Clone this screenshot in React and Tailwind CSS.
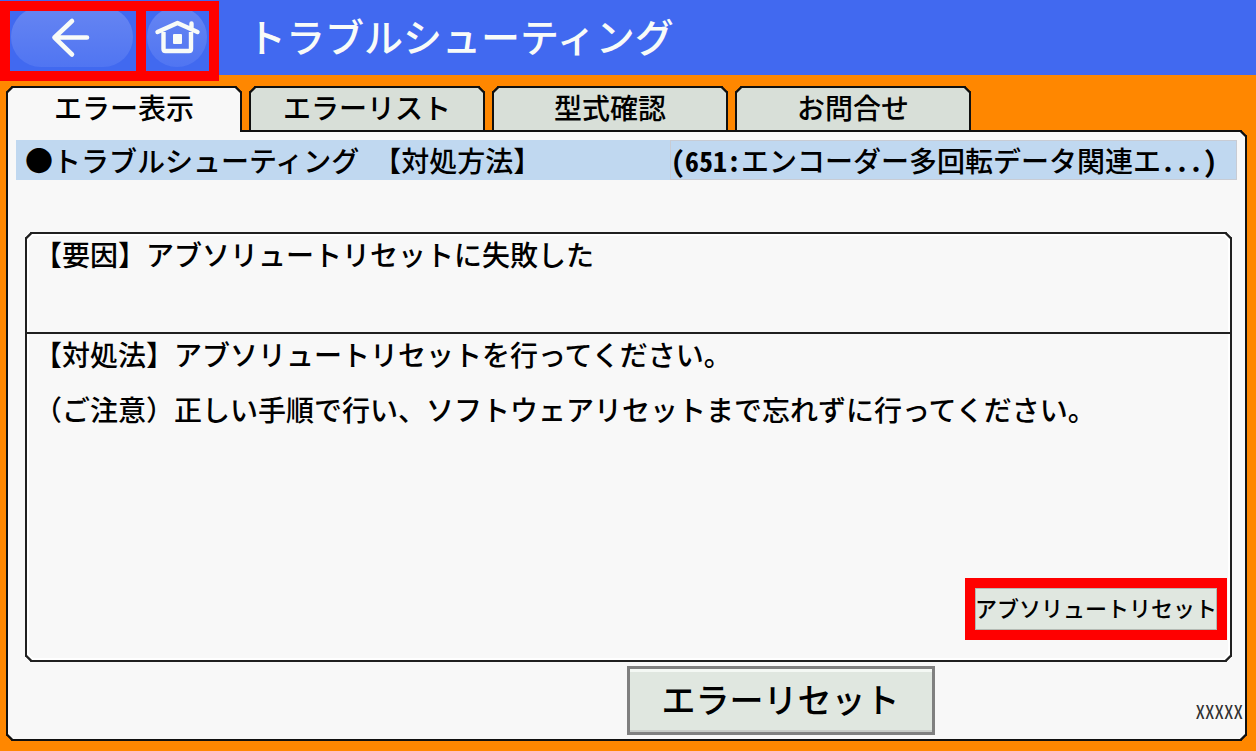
import { useState } from 'react';

const TABS = ['エラー表示', 'エラーリスト', '型式確認', 'お問合せ'];

const BackIcon = () => (
    <svg viewBox="0 0 126 60" className="w-full h-full" fill="none" aria-hidden="true">
        <defs>
            <linearGradient id="backFill" x1="0" y1="0" x2="0" y2="1">
                <stop offset="0" stopColor="#6685f2" />
                <stop offset="1" stopColor="#5075f2" />
            </linearGradient>
        </defs>
        <rect x="1" y="-4" width="122" height="60" rx="30" fill="url(#backFill)" />
        <path d="M62 10L44.5 26.5L62 43.5M44.5 26.5H77" stroke="#f8fbf8" strokeWidth="4.6" strokeLinecap="round" strokeLinejoin="round" />
    </svg>
);

const HomeIcon = () => (
    <svg viewBox="0 0 63 60" className="w-full h-full" fill="none" aria-hidden="true">
        <defs>
            <linearGradient id="homeFill" x1="0" y1="0" x2="0" y2="1">
                <stop offset="0" stopColor="#6685f2" />
                <stop offset="1" stopColor="#5075f2" />
            </linearGradient>
        </defs>
        <circle cx="31" cy="26" r="30" fill="url(#homeFill)" />
        <path d="M17.5 21V38Q17.5 40 19.5 40H43Q45 40 45 38V21" stroke="#f8fbf8" strokeWidth="4.4" />
        <path d="M11.5 21L31.5 12L51.5 21M45.5 12.5V18" stroke="#f8fbf8" strokeWidth="4.4" strokeLinecap="round" strokeLinejoin="round" />
        <rect x="27" y="23" width="9" height="10" rx="1" fill="#f8fbf8" />
    </svg>
);

// Half-width latin characters, two to one kana
const Half = ({ children }) => (
    <span className="font-bold whitespace-pre font-['Noto_Sans_Mono_CJK_JP','Noto_Sans_CJK_JP',monospace]">{children}</span>
);

const Header = () => (
    <header className="flex h-[75px] bg-[#4169f0]">
        <nav className="relative z-10 mt-px flex h-20 shrink-0 gap-[10px] bg-[#ff0000] p-[10px]">
            <button type="button" aria-label="戻る" className="w-[126px] overflow-hidden bg-[#4169f0]">
                <BackIcon />
            </button>
            <button type="button" aria-label="ホーム" className="w-[63px] overflow-hidden bg-[#4169f0]">
                <HomeIcon />
            </button>
        </nav>
        <h1 className="ml-7 whitespace-nowrap text-[39px] leading-[70px] text-[#f8fbf8]">トラブルシューティング</h1>
    </header>
);

const TabBar = ({ active, onChange }) => (
    <div role="tablist" className="relative z-10 -mb-[2px] flex gap-[7px]">
        {TABS.map((label, i) => (
            <button
                key={label}
                type="button"
                role="tab"
                aria-selected={i === active}
                onClick={() => onChange(i)}
                className={`h-[46px] w-[236px] rounded-t-[6px] border-2 border-[#101010] leading-[38px] [corner-shape:bevel] ${
                    i === active ? 'border-b-0 bg-[#f8f8f8] pb-[6px]' : 'bg-[#d8dfd8] pb-1'
                }`}
            >
                {label}
            </button>
        ))}
    </div>
);

const App = () => {
    const [active, setActive] = useState(0);

    return (
        <div className="flex min-h-screen flex-col bg-[#ff8700] text-[28px] font-medium text-black font-['Noto_Sans_CJK_JP',sans-serif]">
            <Header />
            <main className="flex flex-1 flex-col pt-[11px] pr-[9px] pb-[10px] pl-[6px]">
                <TabBar active={active} onChange={setActive} />
                <section className="flex flex-1 flex-col rounded-[6px] rounded-tl-none border-2 border-[#101010] bg-[#f8f8f8] pt-2 [corner-shape:bevel]">
                    <div className="mx-2 flex h-10 items-center bg-[#c0d8f0] leading-10">
                        <h2 className="flex-1 whitespace-nowrap pl-[9px]">
                            ●トラブルシューティング<Half> </Half>【対処方法】
                        </h2>
                        <p className="h-10 w-[567px] whitespace-nowrap border border-[#c8ccd4] leading-[38px]">
                            <Half>(651:</Half>エンコーダー多回転データ関連エ<Half>...)</Half>
                        </p>
                    </div>

                    {/* Cause and remedy */}
                    <div className="mx-[13px] ml-[17px] mt-[52px] flex flex-1 flex-col rounded-[6px] border-2 border-[#202020] leading-10 shadow-[inset_0_0_0_2px_#ffffff] [corner-shape:bevel]">
                        <div className="h-[100px] border-b-2 border-[#202020] pl-[7px]">
                            <p>【要因】アブソリュートリセットに失敗した</p>
                        </div>
                        <div className="flex flex-1 flex-col pl-[7px]">
                            <p>【対処法】アブソリュートリセットを行ってください。</p>
                            <p className="mt-[15px]">（ご注意）正しい手順で行い、ソフトウェアリセットまで忘れずに行ってください。</p>
                            <button
                                type="button"
                                className="mt-auto mr-[3px] mb-5 self-end border-10 border-[#ff0000] bg-[#e0e7e0] pb-1 text-[22px] leading-[38px] whitespace-nowrap shadow-[inset_0_0_0_1px_#b4bab4]"
                            >
                                アブソリュートリセット
                            </button>
                        </div>
                    </div>

                    <div className="flex pt-1 pb-1">
                        <div className="flex-1" />
                        <div className="flex flex-1 items-end justify-between">
                            <button
                                type="button"
                                className="h-[69px] w-[308px] border-3 border-[#808080] bg-[#e0e7e0] pb-1 text-[34px] leading-[58px] whitespace-nowrap shadow-[inset_0_3px_0_#f4f8f4,inset_0_-2px_0_#c8ccc8]"
                            >
                                エラーリセット
                            </button>
                            <span className="pr-[2px] pb-[10px] text-[19px] font-normal text-[#303030] font-['Noto_Sans_Mono_CJK_JP',monospace]">XXXXX</span>
                        </div>
                    </div>
                </section>
            </main>
        </div>
    );
};

export default App;
